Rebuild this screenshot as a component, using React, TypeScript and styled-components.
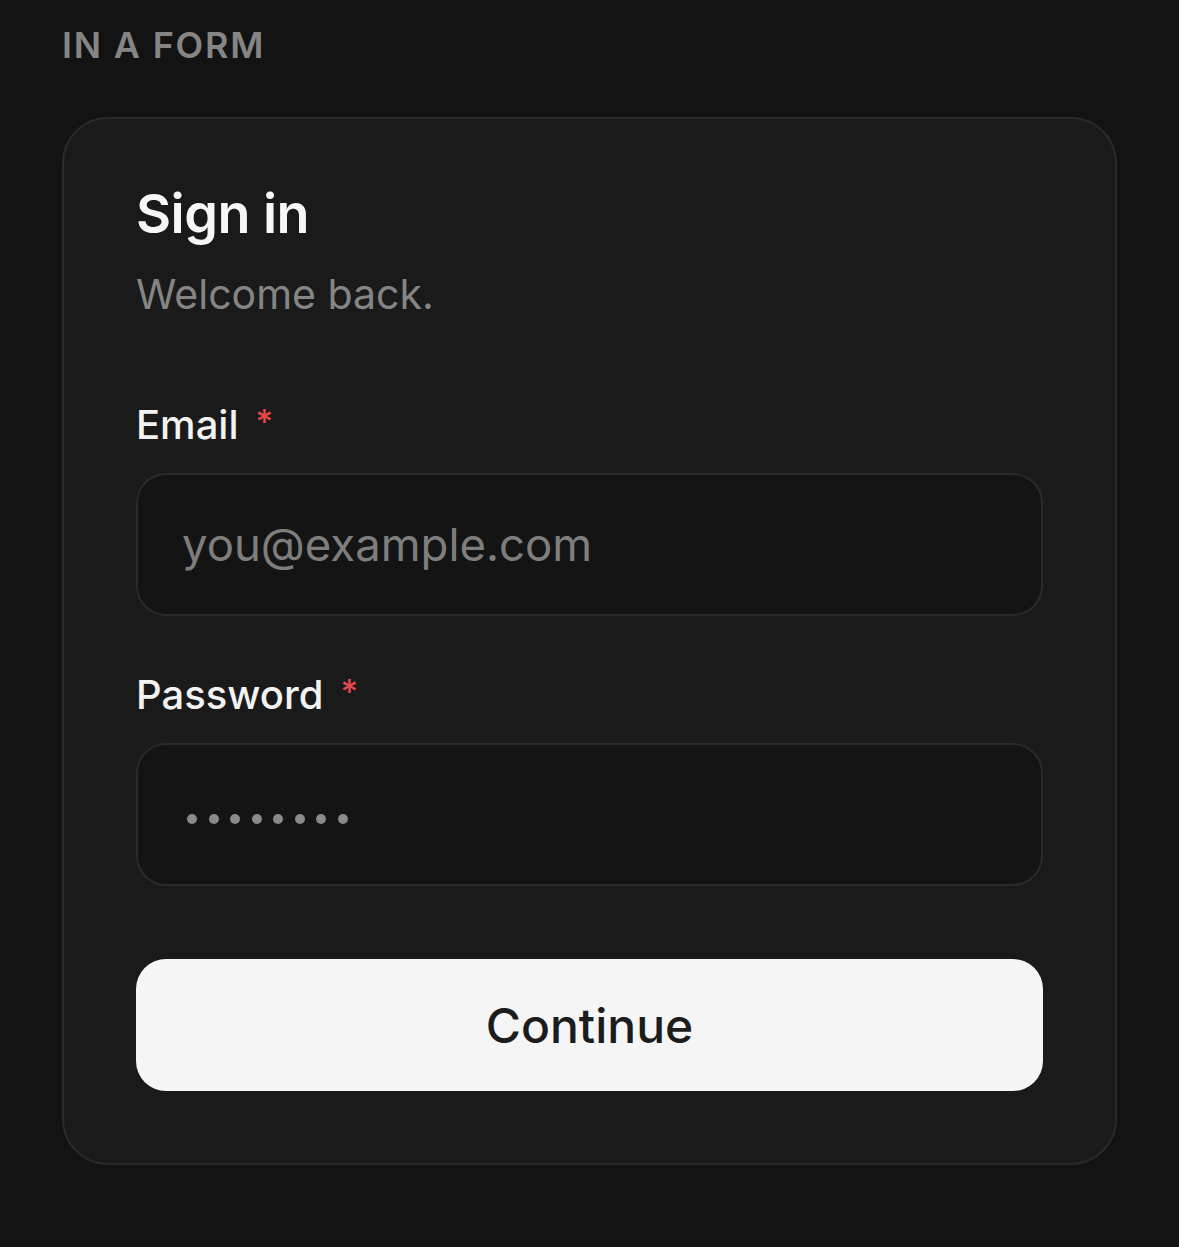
import React from "react";
import styled, { createGlobalStyle } from "styled-components";

const Global = createGlobalStyle`
  html, body { margin: 0; padding: 0; background: #131313; }
  body { font-family: Inter, "Noto Sans", "Liberation Sans", sans-serif; -webkit-font-smoothing: antialiased; }
  * { box-sizing: border-box; }
`;

const Page = styled.div`
  min-height: 1247px;
  padding: 27px 62px 0 62px;
  background: #131313;
`;

const SectionTitle = styled.div`
  font-size: 36px;
  line-height: 1;
  font-weight: 600;
  letter-spacing: 0.05em;
  color: #858585;
  text-transform: uppercase;
`;

const Card = styled.form`
  margin-top: 54px;
  background: #1a1a1a;
  border: 2px solid #2a2a2a;
  border-radius: 46px;
  padding: 68px 72px 72px 72px;
  display: flex;
  flex-direction: column;
`;

const Heading = styled.h2`
  margin: 0;
  font-size: 54px;
  line-height: 1;
  font-weight: 600;
  color: #f7f7f7;
  letter-spacing: -0.01em;
`;

const Subtitle = styled.p`
  margin: 33px 0 0 0;
  font-size: 41px;
  line-height: 1;
  font-weight: 400;
  color: #858585;
`;

const Field = styled.div<{ $first?: boolean }>`
  margin-top: ${(p) => (p.$first ? "90px" : "59px")};
  display: flex;
  flex-direction: column;
  gap: 28px;
`;

const Label = styled.label`
  display: flex;
  align-items: flex-start;
  font-size: 40px;
  line-height: 1;
  font-weight: 500;
  color: #f2f2f2;
`;

const Required = styled.span`
  color: #e5484d;
  font-size: 34px;
  line-height: 1;
  margin-left: 17px;
`;

const InputShell = styled.div`
  height: 143px;
  background: #141414;
  border: 2px solid #2a2a2a;
  border-radius: 30px;
  display: flex;
  align-items: center;
  padding: 0 44px;
`;

const TextInput = styled.input`
  width: 100%;
  border: none;
  outline: none;
  background: transparent;
  font-family: inherit;
  font-size: 45.5px;
  color: #f2f2f2;
  padding: 0;
  &::placeholder { color: #7e7e7e; }
`;

const Dots = styled.div`
  display: flex;
  gap: 11.5px;
  padding-left: 5px;
  margin-top: 8px;
`;

const Dot = styled.span`
  width: 10px;
  height: 10px;
  border-radius: 50%;
  background: #8a8a8a;
`;

const Button = styled.button`
  margin-top: 73px;
  height: 132px;
  border: none;
  border-radius: 30px;
  background: #f5f5f5;
  color: #1c1c1c;
  font-family: inherit;
  font-size: 48px;
  font-weight: 500;
  cursor: pointer;
`;

export default function App() {
  return (
    <>
      <Global />
      <Page>
        <SectionTitle>In a form</SectionTitle>
        <Card onSubmit={(e) => e.preventDefault()}>
          <Heading>Sign in</Heading>
          <Subtitle>Welcome back.</Subtitle>
          <Field $first>
            <Label>
              Email<Required>*</Required>
            </Label>
            <InputShell>
              <TextInput type="email" placeholder="you@example.com" />
            </InputShell>
          </Field>
          <Field>
            <Label>
              Password<Required>*</Required>
            </Label>
            <InputShell>
              <Dots aria-label="password">
                {Array.from({ length: 8 }).map((_, i) => (
                  <Dot key={i} />
                ))}
              </Dots>
            </InputShell>
          </Field>
          <Button type="submit">Continue</Button>
        </Card>
      </Page>
    </>
  );
}
